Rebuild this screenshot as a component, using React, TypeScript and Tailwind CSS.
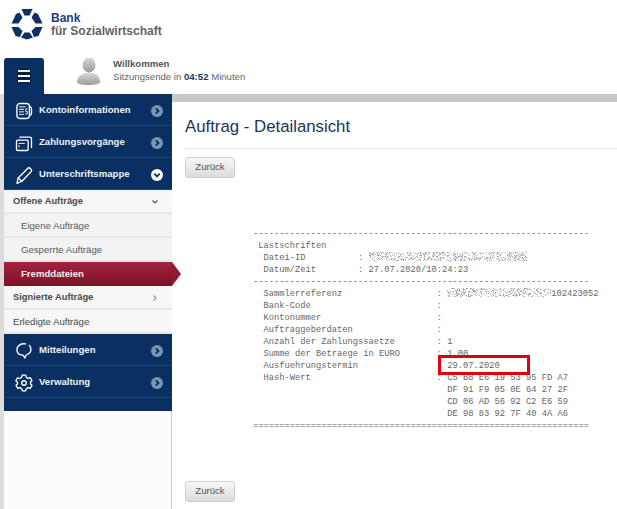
import React from "react";

const sans = { fontFamily: '"Liberation Sans", Arial, sans-serif' };

function Logo() {
  return (
    <svg width="34" height="34" viewBox="10 7 34 34" fill="#0d2f66">
      <polygon points="21.500,9 32.500,9 29.500,15.500 24.500,15.500" />
      <polygon points="34.500,12.500 38,14 42.500,23.500 35.500,23.500 31.500,17.500" />
      <polygon points="35.500,27 42.500,27 38.500,36 34,37 31.500,31" />
      <polygon points="24.500,32.500 29.500,32.500 33,37.500 27,39.500 21,37.500" />
      <polygon points="18.500,27 11.500,27 15.500,36 20,37 22.500,31" />
      <polygon points="19.500,12.500 16,14 11.500,23.500 18.500,23.500 22.500,17.500" />
    </svg>
  );
}

function Kind({ c }: { c: React.ReactNode }) {
  return (
    <svg width="20" height="20" viewBox="0 0 24 24" fill="none" stroke="#fff" strokeWidth="1.600" strokeLinecap="round" strokeLinejoin="round">
      {c}
    </svg>
  );
}

const icons: Record<string, React.ReactNode> = {
  konto: (
    <Kind
      c={
        <>
          <rect x="3.500" y="3" width="15" height="18" rx="3.500" />
          <path d="M6.500 7h7M6.500 10h5M6.500 13h5M6.500 16h5" strokeWidth="1.100" />
          <path d="M19 6.500c1.500.5 2 1.500 2 3v5c0 1.500-.5 2.500-2 3" />
          <path d="M16 9.500h-2v3h2v3h-2.200" strokeWidth="1" />
        </>
      }
    />
  ),
  zahl: (
    <Kind
      c={
        <>
          <rect x="3" y="8.500" width="14" height="12.500" rx="1.500" />
          <path d="M7 5h12a2 2 0 0 1 2 2v10.500" />
          <path d="M6 12.500h6.500M6 15v2" strokeWidth="1.100" />
        </>
      }
    />
  ),
  pen: (
    <Kind
      c={
        <>
          <path d="M3.500 22 L5 15.500 L17 3.500 C18.500 2.500 22 6 21 7.500 L9.500 19.500 Z" />
          <path d="M5 15.500 L9.500 19.500" />
        </>
      }
    />
  ),
  msg: (
    <Kind
      c={
        <>
          <path d="M14 3.500C8 2.500 3.500 6 3.500 10.500c0 4 3 6.300 7 6.500 1 .5 1.800 2 2.500 3.500 .3-1.300.8-3 2.300-4 3-1.200 5-3.400 5-6 0-2.200-.6-4-2-5.300" />
        </>
      }
    />
  ),
  gear: (
    <Kind
      c={
        <>
          <circle cx="12" cy="12" r="2.700" />
          <path d="M10 2.500h4l.8 2.700 2.300 1.200 2.500-.7 2 3.400-1.800 1.900v2l1.800 1.900-2 3.400-2.500-.7-2.300 1.200-.8 2.700h-4l-.8-2.700-2.300-1.200-2.500.7-2-3.400 1.800-1.900v-2L2.200 9.300l2-3.400 2.500.7 2.300-1.200z" />
        </>
      }
    />
  ),
};

function Chevron({ open, light }: { open?: boolean; light?: boolean }) {
  return (
    <span className={`flex h-[12px] w-[12px] items-center justify-center rounded-full ${light ? "bg-white" : "bg-[#7d93b2]"}`}>
      <svg width="8" height="8" viewBox="0 0 8 8" fill="none" stroke="#0a2f62" strokeWidth="1.800">
        {open ? <path d="M1.300 2.700 L4 5.400 L6.700 2.700" /> : <path d="M2.800 1.300 L5.500 4 L2.800 6.700" />}
      </svg>
    </span>
  );
}

function MainItem({ icon, label, open }: { icon: string; label: string; open?: boolean }) {
  return (
    <div className="flex h-[32px] items-center border-b border-[#1d4675] pl-[10px] pr-[9px] pt-[2px]">
      <span className="flex w-[25px] shrink-0">{icons[icon]}</span>
      <span className="flex-1 text-[9.600px] font-bold text-[#eef2f7]">{label}</span>
      <Chevron open={open} light={open} />
    </div>
  );
}

function SubHead({ label, open, bold = true }: { label: string; open?: boolean; bold?: boolean }) {
  return (
    <div className="flex h-[24px] items-center border-b-2 border-[#e8e8e8] bg-[#f6f6f6] pl-[9px] pr-[13px] pt-[2px]">
      <span className={`flex-1 text-[#4a4a4a] ${bold ? "text-[9.300px] font-bold" : "text-[9.600px]"}`}>{label}</span>
      {bold && (
        <svg width="8" height="8" viewBox="0 0 8 8" fill="none" stroke={open ? "#555" : "#999"} strokeWidth="1.200">
          {open ? <path d="M1.500 2.500 L4 5 L6.500 2.500" /> : <path d="M2.500 1.500 L5 4 L2.500 6.500" />}
        </svg>
      )}
    </div>
  );
}

function Leaf({ label }: { label: string }) {
  return (
    <div className="flex h-[24px] items-center border-b-2 border-[#e8e8e8] bg-[#f3f3f3] pl-[17px] pt-[2px] text-[9.600px] text-[#5a5a5a]">
      {label}
    </div>
  );
}

function Noise({ width, seed }: { width: number; seed: number }) {
  const dots: React.ReactNode[] = [];
  let s = seed;
  for (let x = 0; x < width; x++) {
    for (let y = 0; y < 9; y++) {
      s = (s * 16807) % 2147483647;
      if (s % 100 < 42) {
        const v = 150 + (s % 90);
        dots.push(<rect key={`${x}-${y}`} x={x} y={y} width="1" height="1" fill={`rgb(${v},${v},${v})`} />);
      }
    }
  }
  return (
    <svg width={width} height="9" className="inline-block align-[-1px]">
      {dots}
    </svg>
  );
}

function ZurueckButton() {
  return (
    <button className="block h-[21px] w-[50px] rounded-[3px] border border-[#cfcfcf] bg-gradient-to-b from-[#f7f7f7] to-[#dcdcdc] text-[9.600px] text-[#555]">
      Zurück
    </button>
  );
}

const dash = "-".repeat(64);
const eq = "=".repeat(64);

export default function App() {
  return (
    <div className="h-[509px] w-[617px] overflow-hidden bg-white" style={sans}>
      <header className="flex h-[58px] items-start pl-[10px] pt-[7px]">
        <Logo />
        <div className="ml-[7px] mt-[5px] text-[12px] leading-[13px]">
          <div className="font-bold text-[#23407a]">Bank</div>
          <div className="font-bold text-[#5f6368]">für Sozialwirtschaft</div>
        </div>
      </header>

      <div className="flex h-[36px] pl-[4px]">
        <div className="flex h-[36px] w-[40px] items-center justify-center rounded-t-[3px] bg-[#0a2f62]">
          <span className="flex h-[14px] w-[14px] flex-col justify-between bg-[#0a2242] px-[1px] py-[1px]">
            <i className="block h-[2px] bg-[#f5f2d0]" />
            <i className="block h-[2px] bg-white" />
            <i className="block h-[2px] bg-white" />
          </span>
        </div>
        <div className="ml-[30px] w-[30px]">
          <svg width="28" height="28" viewBox="0 0 28 28" className="block">
            <defs>
              <linearGradient id="u" x1="0" y1="0" x2="0" y2="1">
                <stop offset="0" stopColor="#d8d8d8" />
                <stop offset="1" stopColor="#9a9a9a" />
              </linearGradient>
            </defs>
            <ellipse cx="15" cy="7" rx="6.500" ry="7.500" fill="url(#u)" />
            <path d="M3 24c0-5 4-8 8-9h8c4 1 7 4 7 9 0 2-5 3-11.500 3S3 26 3 24z" fill="url(#u)" />
          </svg>
        </div>
        <div className="-mt-[1px] ml-[9px] text-[9.600px] leading-[13px] text-[#666]">
          <div className="font-bold text-[#555]">Willkommen</div>
          <div>
            Sitzungsende in <b className="text-[#23395b]">04:52</b> Minuten
          </div>
        </div>
      </div>

      <div className="flex h-[415px]">
        <aside className="w-[172px] shrink-0 bg-[#fbfbfb] pl-[4px] shadow-[inset_4px_0_0_#dcdcdc,inset_-1px_0_0_#c9c9c9]">
          <nav className="w-[168px]">
            <div className="bg-[#0a2f62]">
              <MainItem icon="konto" label="Kontoinformationen" />
              <MainItem icon="zahl" label="Zahlungsvorgänge" />
              <MainItem icon="pen" label="Unterschriftsmappe" open />
            </div>
            <SubHead label="Offene Aufträge" open />
            <Leaf label="Eigene Aufträge" />
            <Leaf label="Gesperrte Aufträge" />
            <div className="relative flex h-[24px] items-center bg-gradient-to-b from-[#a3233f] to-[#7c1127] pl-[17px] text-[9.600px] font-bold text-[#fbe9ee]">
              Fremddateien
              <span className="absolute left-full top-0 h-0 w-0 border-y-[12px] border-l-[9px] border-y-transparent border-l-[#8e1a33]" />
            </div>
            <SubHead label="Signierte Aufträge" />
            <SubHead label="Erledigte Aufträge" bold={false} />
            <div className="bg-[#0a2f62] pb-[13px]">
              <MainItem icon="msg" label="Mitteilungen" />
              <MainItem icon="gear" label="Verwaltung" />
            </div>
          </nav>
        </aside>

        <main className="min-w-0 flex-1">
          <div className="h-[8px] bg-[#c8c8c8]" />
          <div className="pl-[13px]">
            <h1 className="flex h-[46px] items-center pt-[4px] text-[16.800px] font-normal text-[#1c3551]">Auftrag - Detailansicht</h1>
            <div className="mb-[8px] h-px bg-[#e3e3e3]" />
            <ZurueckButton />
            <div className="relative ml-[68px] mt-[50px] h-[204px] w-[360px]">
              <pre className="text-[8.750px] leading-[12px] text-[#666]" style={{ fontFamily: '"Liberation Mono", monospace' }}>
                {dash + "\n"}
                {" Lastschriften\n"}
                {"  Datei-ID          : "}
                <Noise width={158} seed={77} />
                {"\n"}
                {"  Datum/Zeit        : 27.07.2020/10:24:23\n"}
                {dash + "\n"}
                {"  Sammlerreferenz                  : "}
                <Noise width={104} seed={4242} />
                {"102423052\n"}
                {"  Bank-Code                        :\n"}
                {"  Kontonummer                      :\n"}
                {"  Auftraggeberdaten                :\n"}
                {"  Anzahl der Zahlungssaetze        : 1\n"}
                {"  Summe der Betraege in EURO       : 1.00\n"}
                {"  Ausfuehrungstermin                 29.07.2020\n"}
                {"  Hash-Wert                        : C5 B8 E6 19 53 95 FD A7\n"}
                {"                                     DF 91 F9 05 0E 64 27 2F\n"}
                {"                                     CD 06 AD 56 92 C2 E6 59\n"}
                {"                                     DE 98 83 92 7F 40 4A A6\n"}
                {eq}
              </pre>
              <div className="absolute left-[185px] top-[127px] h-[20px] w-[92px] border-[3px] border-[#e0000f]" />
            </div>
            <div className="mt-[49px]">
              <ZurueckButton />
            </div>
          </div>
        </main>
      </div>
    </div>
  );
}
